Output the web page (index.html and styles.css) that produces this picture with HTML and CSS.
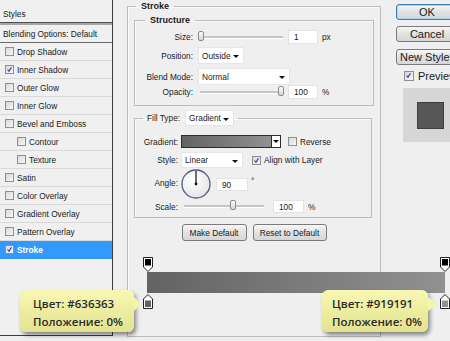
FILE: index.html
```html
<!DOCTYPE html>
<html lang="en">
<head>
  <meta charset="UTF-8">
  <meta name="viewport" content="width=device-width, initial-scale=1.0">
  <title>Layer Style - Stroke</title>
  <link rel="stylesheet" href="styles.css">
</head>
<body>

  <div class="dialog">

    <!-- Styles list -->
    <div class="styles-list">
      <div class="list-head">Styles</div>
      <div class="list-blend">Blending Options: Default</div>
      <div class="list-item"><span class="check"></span>Drop Shadow</div>
      <div class="list-item"><span class="check on"><svg viewBox="0 0 9 9"><path d="M2 4.5 L3.8 6.8 L7 1.8" /></svg></span>Inner Shadow</div>
      <div class="list-item"><span class="check"></span>Outer Glow</div>
      <div class="list-item"><span class="check"></span>Inner Glow</div>
      <div class="list-item"><span class="check"></span>Bevel and Emboss</div>
      <div class="list-item sub"><span class="check"></span>Contour</div>
      <div class="list-item sub"><span class="check"></span>Texture</div>
      <div class="list-item"><span class="check"></span>Satin</div>
      <div class="list-item"><span class="check"></span>Color Overlay</div>
      <div class="list-item"><span class="check"></span>Gradient Overlay</div>
      <div class="list-item"><span class="check"></span>Pattern Overlay</div>
      <div class="list-item selected"><span class="check on"><svg viewBox="0 0 9 9"><path d="M2 4.5 L3.8 6.8 L7 1.8" /></svg></span>Stroke</div>
    </div>

    <!-- Stroke settings -->
    <fieldset class="group stroke">
      <legend>Stroke</legend>

      <fieldset class="group structure">
        <legend>Structure</legend>
        <div class="row row-size">
          <span class="label">Size:</span>
          <div class="slider"><span class="thumb thumb-min"></span></div>
          <span class="field">1</span>
          <span class="unit">px</span>
        </div>
        <div class="row row-position">
          <span class="label">Position:</span>
          <span class="select select-position">Outside<i class="arrow"></i></span>
        </div>
        <div class="row row-blend">
          <span class="label">Blend Mode:</span>
          <span class="select select-blend">Normal<i class="arrow"></i></span>
        </div>
        <div class="row row-opacity">
          <span class="label">Opacity:</span>
          <div class="slider"><span class="thumb thumb-max"></span></div>
          <span class="field">100</span>
          <span class="unit">%</span>
        </div>
      </fieldset>

      <fieldset class="group fill">
        <legend><span class="legend-label">Fill Type:</span><span class="select select-fill">Gradient<i class="arrow"></i></span></legend>
        <div class="row row-gradient">
          <span class="label">Gradient:</span>
          <span class="swatch"><span class="swatch-fill"></span><i class="arrow"></i></span>
          <span class="check reverse"></span>
          <span class="text">Reverse</span>
        </div>
        <div class="row row-style">
          <span class="label">Style:</span>
          <span class="select select-style">Linear<i class="arrow"></i></span>
          <span class="check align on"><svg viewBox="0 0 9 9"><path d="M2 4.5 L3.8 6.8 L7 1.8" /></svg></span>
          <span class="text">Align with Layer</span>
        </div>
        <div class="row row-angle">
          <span class="label">Angle:</span>
          <svg class="dial" viewBox="0 0 30 30">
            <defs>
              <radialGradient id="dialFill" cx="40%" cy="35%" r="70%">
                <stop offset="0" stop-color="#ffffff"/>
                <stop offset="1" stop-color="#e4e4e8"/>
              </radialGradient>
            </defs>
            <circle cx="15" cy="15" r="14" fill="url(#dialFill)" stroke="#4e5a80" stroke-width="1.3"/>
            <line x1="15" y1="15" x2="15" y2="2" stroke="#111" stroke-width="1.2"/>
            <circle cx="15" cy="15" r="1.4" fill="#111"/>
          </svg>
          <span class="field field-angle">90</span>
          <span class="unit degree">°</span>
        </div>
        <div class="row row-scale">
          <span class="label">Scale:</span>
          <div class="slider slider-scale"><span class="thumb thumb-scale"></span></div>
          <span class="field field-scale">100</span>
          <span class="unit">%</span>
        </div>
      </fieldset>

      <div class="actions">
        <span class="btn btn-make">Make Default</span>
        <span class="btn btn-reset">Reset to Default</span>
      </div>
    </fieldset>

    <!-- Dialog buttons -->
    <div class="side">
      <span class="btn btn-side btn-ok">OK</span>
      <span class="btn btn-side btn-cancel">Cancel</span>
      <span class="btn btn-side btn-new">New Style...</span>
      <div class="preview-row">
        <span class="check on"><svg viewBox="0 0 9 9"><path d="M2 4.5 L3.8 6.8 L7 1.8" /></svg></span>
        <span class="text">Preview</span>
      </div>
      <div class="preview-box"><span class="preview-square"></span></div>
    </div>

  </div>

  <!-- Gradient editor strip -->
  <div class="gradient-editor">
    <div class="stops">
      <svg class="stop" viewBox="0 0 10 15"><path d="M0.5 0.5 H9.5 V10 L5 14.5 L0.5 10 Z" fill="#fff" stroke="#222"/><rect x="2" y="2" width="6" height="6.5" fill="#000"/></svg>
      <svg class="stop" viewBox="0 0 10 15"><path d="M0.5 0.5 H9.5 V10 L5 14.5 L0.5 10 Z" fill="#fff" stroke="#222"/><rect x="2" y="2" width="6" height="6.5" fill="#000"/></svg>
    </div>
    <div class="gradient-bar"></div>
    <div class="stops">
      <svg class="stop" viewBox="0 0 10 15"><path d="M0.5 14.5 H9.5 V5 L5 0.5 L0.5 5 Z" fill="#fff" stroke="#222"/><rect x="2" y="6.5" width="6" height="6.5" fill="#636363"/></svg>
      <svg class="stop" viewBox="0 0 10 15"><path d="M0.5 14.5 H9.5 V5 L5 0.5 L0.5 5 Z" fill="#fff" stroke="#222"/><rect x="2" y="6.5" width="6" height="6.5" fill="#919191"/></svg>
    </div>
  </div>

  <div class="tip tip-left">
    <div>Цвет: #636363</div>
    <div>Положение: 0%</div>
  </div>
  <div class="tip tip-right">
    <div>Цвет: #919191</div>
    <div>Положение: 0%</div>
  </div>

</body>
</html>
```

FILE: styles.css
```css
body {
  margin: 0;
  width: 450px;
  height: 341px;
  overflow: hidden;
  background: #efefef;
  font-family: 'Liberation Sans', Arial, sans-serif;
  font-size: 8.3px;
  color: #1a1a1a;
  position: relative;
}

.dialog {
  display: flex;
  align-items: flex-start;
}

/* Styles list */
.styles-list {
  width: 112px;
  height: 335px;
  flex-shrink: 0;
  background: #f0f0f0;
  border-right: 1px solid #3c3c3c;
  border-bottom: 1px solid #3c3c3c;
}

.list-head {
  height: 22px;
  line-height: 28px;
  padding-left: 3px;
  border-bottom: 1px solid #505050;
}

.list-blend {
  height: 17px;
  line-height: 18px;
  padding-left: 3px;
  border-top: 2px solid #a6a6a6;
  border-bottom: 1px solid #6a6a6a;
}

.list-item {
  height: 17px;
  display: flex;
  align-items: center;
  padding-left: 5px;
  border-bottom: 1px solid #d9d9d9;
}

.list-item .check {
  margin-right: 3px;
}

.list-item.sub {
  padding-left: 17px;
}

.list-item.selected {
  background: #3399ff;
  color: #fff;
  font-weight: bold;
  border-bottom-color: #3399ff;
}

/* Checkboxes */
.check {
  width: 9px;
  height: 9px;
  box-sizing: border-box;
  border: 1px solid #8f8f8f;
  background: linear-gradient(135deg, #d8d8d8, #f7f7f7);
  display: inline-flex;
  flex-shrink: 0;
}

.check svg {
  width: 7px;
  height: 7px;
}

.check path {
  fill: none;
  stroke: #2a3f9e;
  stroke-width: 1.4;
}

/* Group boxes */
.group {
  margin: 0;
  padding: 0;
  min-width: 0;
  border: 1px solid #bcbcbc;
  box-shadow: inset 1px 1px 0 #fafafa;
}

.group legend {
  font-weight: bold;
  font-size: 9px;
  line-height: 12px;
  padding: 0 5px;
}

.stroke {
  width: 254px;
  height: 337px;
  box-sizing: border-box;
  margin-left: 14px;
  flex-shrink: 0;
}

.stroke > legend {
  margin-left: 8px;
}

.structure {
  width: 240px;
  box-sizing: border-box;
  margin: 2px 0 0 6px;
  padding-bottom: 6px;
}

.structure > legend {
  margin-left: 10px;
}

.fill {
  width: 238px;
  box-sizing: border-box;
  margin: 4px 0 0 6px;
  padding-bottom: 4px;
}

.fill > legend {
  margin-left: 8px;
  padding: 0 4px;
  font-weight: normal;
  font-size: 8.3px;
  display: flex;
  align-items: center;
  line-height: 16px;
}

.legend-label {
  margin-right: 5px;
}

/* Rows */
.row {
  display: flex;
  align-items: center;
  white-space: nowrap;
}

.label {
  text-align: right;
  flex-shrink: 0;
}

.structure .label {
  width: 58px;
  margin-right: 5px;
}

.fill .label {
  width: 43px;
  margin-right: 3px;
}

.row-size { margin-top: 4px; height: 14px; }
.row-position { margin-top: 3px; height: 17px; }
.row-blend { margin-top: 4px; height: 17px; }
.row-opacity { height: 14px; }

.row-gradient { margin-top: 9px; height: 13px; }
.row-style { margin-top: 4px; height: 16px; }
.row-angle { margin-top: 1px; height: 30px; align-items: flex-start; }
.row-angle .label { line-height: 28px; }
.row-scale { margin-top: 1px; height: 13px; }

/* Sliders */
.slider {
  position: relative;
  width: 83px;
  height: 2px;
  margin-left: 2px;
  background: #c6c6c6;
  border-bottom: 1px solid #fff;
}

.slider-scale {
  width: 80px;
  margin-left: 3px;
}

.thumb {
  position: absolute;
  top: -5px;
  width: 6px;
  height: 10px;
  box-sizing: border-box;
  border: 1px solid #8a8a8a;
  border-radius: 2px;
  background: linear-gradient(#fdfdfd, #d5d5d5);
}

.thumb-min { left: -2px; }
.thumb-max { left: 78px; }
.thumb-scale { left: 46px; }

/* Fields */
.field {
  width: 30px;
  height: 14px;
  box-sizing: border-box;
  margin-left: 5px;
  padding-left: 5px;
  background: #fff;
  border: 1px solid #e4e4e4;
  line-height: 12px;
}

.field-angle {
  width: 32px;
  height: 13px;
  margin-top: 9px;
}

.field-scale {
  width: 31px;
  height: 13px;
  margin-left: 9px;
}

.unit {
  margin-left: 4px;
}

.degree {
  margin-left: 3px;
  margin-top: 7px;
}

/* Selects */
.select {
  position: relative;
  height: 17px;
  box-sizing: border-box;
  padding-left: 3px;
  background: #fff;
  border: 1px solid #e6e6e6;
  display: inline-flex;
  align-items: center;
  white-space: nowrap;
}

.select .arrow {
  position: absolute;
  right: 4px;
  top: 7px;
}

.arrow {
  width: 0;
  height: 0;
  border-left: 3px solid transparent;
  border-right: 3px solid transparent;
  border-top: 3px solid #111;
}

.select-position { width: 46px; }
.select-blend { width: 92px; }
.select-fill { width: 49px; height: 16px; }
.select-style { width: 62px; height: 16px; }

/* Gradient swatch */
.swatch {
  width: 100px;
  height: 13px;
  box-sizing: border-box;
  border: 1px solid #2a2a2a;
  display: flex;
  background: #fff;
}

.swatch-fill {
  flex: 1;
  background: linear-gradient(90deg, #636363, #919191);
  border-right: 1px solid #2a2a2a;
}

.swatch .arrow {
  margin: 4px 1px 0;
}

.reverse {
  margin-left: 7px;
}

.align {
  margin-left: 9px;
}

.row .text {
  margin-left: 3px;
}

.dial {
  width: 30px;
  height: 30px;
  flex-shrink: 0;
}

/* Buttons */
.btn {
  display: inline-flex;
  align-items: center;
  justify-content: center;
  height: 17px;
  box-sizing: border-box;
  border: 1px solid #7a7a7a;
  border-radius: 3px;
  background: linear-gradient(#f7f7f7, #e2e2e2 50%, #d6d6d6);
  white-space: nowrap;
}

.actions {
  display: flex;
  justify-content: center;
  gap: 6px;
  margin-top: 6px;
}

.btn-make { width: 65px; }
.btn-reset { width: 74px; }

.side {
  margin-left: 15px;
  display: flex;
  flex-direction: column;
  flex-shrink: 0;
}

.btn-side {
  width: 62px;
  height: 16px;
  font-size: 11px;
}

.btn-ok {
  margin-top: 4px;
  border-color: #3c7fb1;
  box-shadow: inset 0 0 0 1px #a6d4f2;
}

.btn-cancel { margin-top: 6px; }
.btn-new { margin-top: 7px; justify-content: flex-start; padding-left: 3px; }

.preview-row {
  display: flex;
  align-items: center;
  margin: 6px 0 0 8px;
  height: 10px;
  font-size: 11px;
  white-space: nowrap;
}

.preview-row .check {
  width: 10px;
  height: 10px;
}

.preview-row .text {
  margin-left: 4px;
}

.preview-box {
  width: 55px;
  height: 54px;
  margin: 7px 0 0 7px;
  background: #d6d6d6;
  display: flex;
  align-items: center;
  justify-content: center;
}

.preview-square {
  width: 27px;
  height: 27px;
  box-sizing: border-box;
  background: #575757;
  border: 1px solid #3e3e3e;
}

/* Gradient editor overlay */
.gradient-editor {
  position: absolute;
  left: 143px;
  top: 257px;
  width: 307px;
}

.stops {
  display: flex;
  justify-content: space-between;
  height: 15px;
}

.stop {
  width: 10px;
  height: 15px;
}

.gradient-bar {
  height: 21px;
  margin: 0 5px 1px 4px;
  background: linear-gradient(90deg, #636363, #919191);
}

/* Tooltips */
.tip {
  position: absolute;
  top: 290px;
  height: 42px;
  box-sizing: border-box;
  padding: 5px 0 0 13px;
  border-radius: 6px;
  background: linear-gradient(#f8f8b4, #e3e38f);
  box-shadow: 2px 3px 4px rgba(0, 0, 0, 0.45);
  font-family: 'Open Sans', 'Liberation Sans', sans-serif;
  font-size: 11.5px;
  font-weight: 600;
  line-height: 18px;
  color: #2a2a2a;
  white-space: nowrap;
}

.tip::after {
  content: "";
  position: absolute;
  right: -7px;
  top: 7px;
  border-top: 7px solid transparent;
  border-bottom: 7px solid transparent;
  border-left: 7px solid #f4f4ab;
}

.tip-left {
  left: 20px;
  width: 114px;
}

.tip-right {
  left: 322px;
  width: 106px;
  padding-left: 10px;
}

.tip-right::after {
  right: -10px;
  border-left-width: 10px;
}
```
